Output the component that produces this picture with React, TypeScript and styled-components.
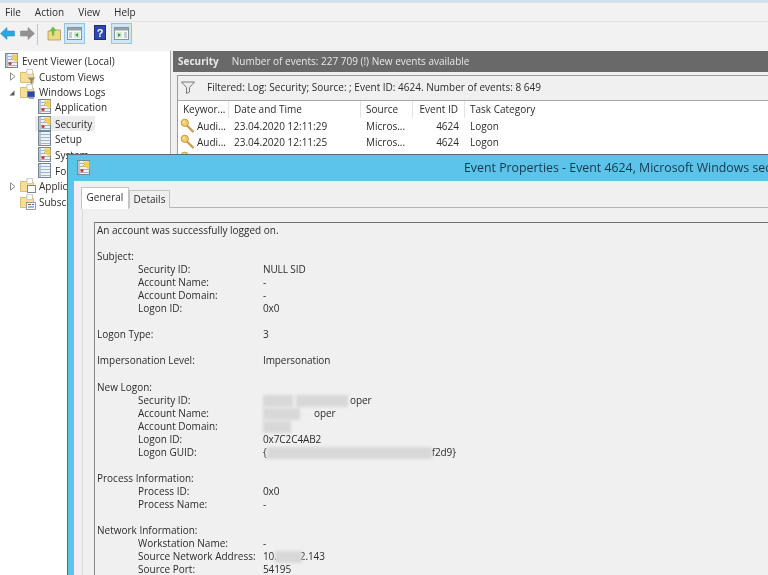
import React from 'react';
import styled, { createGlobalStyle } from 'styled-components';

const GlobalStyle = createGlobalStyle`
  html, body {
    margin: 0;
    padding: 0;
    width: 768px;
    height: 575px;
    overflow: hidden;
    background: #f0f0f0;
  }
  * { box-sizing: border-box; }
`;

const Page = styled.div`
  position: relative;
  width: 768px;
  height: 575px;
  overflow: hidden;
  background: #f0f0f0;
  color: #2b2b2b;
  font-family: 'Open Sans', 'Noto Sans', sans-serif;
  font-size: 10px;
  filter: blur(0.35px);
`;

const TopStrip = styled.div`
  height: 3px;
  background: #d5e0e8;
`;

const MenuBar = styled.div`
  display: flex;
  height: 19px;
  padding-left: 5px;
  gap: 14px;
  align-items: center;
  background: #f2f2f2;
  border-bottom: 1px solid #e4e4e4;
`;

const MenuItem = styled.span`
  font-size: 10px;
`;

const ToolBar = styled.div`
  position: relative;
  height: 29px;
  background: #f2f2f2;
`;

const ToolIcon = styled.svg<{ $x: number; $y?: number }>`
  position: absolute;
  left: ${p => p.$x}px;
  top: ${p => p.$y ?? 3}px;
`;

const ToolSep = styled.div`
  position: absolute;
  left: 37px;
  top: 2px;
  width: 1px;
  height: 21px;
  background: #c4c4c4;
`;

const ToolToggle = styled.div<{ $x: number }>`
  position: absolute;
  left: ${p => p.$x}px;
  top: 1px;
  width: 21px;
  height: 21px;
  background: #cfe6f5;
  border: 1px solid #8fc6e6;
`;

const TreePanel = styled.div`
  position: absolute;
  left: 0;
  top: 51px;
  width: 171px;
  height: 524px;
  background: #fff;
  border-right: 1px solid #b0b0b0;
`;

const TreeRow = styled.div<{ $y: number; $depth: number; $selected?: boolean; $folder?: boolean }>`
  position: absolute;
  top: ${p => p.$y}px;
  left: ${p => p.$depth}px;
  height: 15px;
  display: flex;
  align-items: center;
  gap: ${p => (p.$folder ? 3 : 4)}px;
  padding-right: 3px;
  padding-left: ${p => (p.$selected ? 3 : 0)}px;
  white-space: nowrap;
  background: ${p => (p.$selected ? '#ececec' : 'transparent')};
`;

const CaretIcon = styled.svg<{ $y: number }>`
  position: absolute;
  left: 9px;
  top: ${p => p.$y}px;
`;

const RightPanel = styled.div`
  position: absolute;
  left: 173px;
  top: 51px;
  width: 595px;
  height: 110px;
  background: #f0f0f0;
`;

const Heading = styled.div`
  display: flex;
  align-items: center;
  height: 21px;
  padding: 0 0 2px 5px;
  background: #696969;
  color: #e8e8e8;
`;

const HeadingTitle = styled.span`
  font-weight: 700;
  margin-right: 13px;
`;

const FilterBox = styled.div`
  position: absolute;
  left: 4px;
  top: 24px;
  width: 591px;
  height: 85px;
  background: #fff;
  border: 1px solid #9a9a9a;
  border-right: 0;
  overflow: hidden;
`;

const FilterRow = styled.div`
  position: relative;
  display: flex;
  align-items: center;
  height: 25px;
  padding: 0 0 2px 29px;
  background: #f0f0f0;
  border-bottom: 1px solid #a8a8a8;
`;

const FilterIcon = styled.svg`
  position: absolute;
  left: 3px;
  top: 5px;
`;

const TableRow = styled.div`
  display: flex;
  align-items: center;
  height: 16.5px;
  background: #fff;
`;

const Cell = styled.div<{ $w: number; $right?: boolean; $head?: boolean }>`
  position: relative;
  width: ${p => p.$w}px;
  height: 100%;
  line-height: 16px;
  flex: none;
  padding: ${p => (p.$right ? '0 6px 0 0' : '0 0 0 5px')};
  text-align: ${p => (p.$right ? 'right' : 'left')};
  white-space: nowrap;
  overflow: hidden;
  ${p => p.$head && 'border-right: 1px solid #e3e3e3;'}
`;

const KeyIcon = styled.svg`
  position: absolute;
  left: 2px;
  top: 0;
`;

const KeyCellText = styled.span`
  padding-left: 14px;
`;

const Dialog = styled.div`
  position: absolute;
  left: 67px;
  top: 154px;
  width: 701px;
  height: 421px;
  background: #f0f0f0;
  border-top: 1px solid #5a6b75;
  border-left: 1px solid #5a6b75;
`;

const TitleBar = styled.div`
  position: relative;
  height: 26px;
  background: #5cc4ea;
  color: #16384a;
  font-size: 12.35px;
  line-height: 25px;
  padding-left: 396px;
  white-space: nowrap;
`;

const TitleIcon = styled.svg`
  position: absolute;
  left: 9px;
  top: 5px;
`;

const BlueEdge = styled.div`
  position: absolute;
  left: 0;
  top: 26px;
  bottom: 0;
  width: 6px;
  background: #5cc4ea;
`;

const Tab = styled.div<{ $x: number; $w: number; $active?: boolean }>`
  position: absolute;
  left: ${p => p.$x}px;
  top: ${p => (p.$active ? 32 : 35)}px;
  width: ${p => p.$w}px;
  height: ${p => (p.$active ? 22 : 18)}px;
  text-align: center;
  line-height: ${p => (p.$active ? 19 : 17)}px;
  background: ${p => (p.$active ? '#fff' : '#f0f0f0')};
  border: 1px solid #c4c4c4;
  border-bottom: 0;
  z-index: 2;
`;

const TabFrame = styled.div`
  position: absolute;
  left: 14px;
  top: 52px;
  width: 692px;
  height: 369px;
  background: #f0f0f0;
  border-top: 1px solid #b4b4b4;
  border-left: 1px solid #dadada;
`;

const MessageBox = styled.div`
  position: absolute;
  left: 11px;
  top: 14px;
  width: 680px;
  height: 360px;
  padding: 1px 0 0 2px;
  border-top: 1px solid #6e6e6e;
  border-left: 1px solid #8a8a8a;
`;

const Line = styled.div<{ $indent?: boolean }>`
  position: relative;
  height: 13.05px;
  line-height: 13.05px;
  white-space: nowrap;
  padding-left: ${p => (p.$indent ? 41 : 0)}px;
`;

const LineLabel = styled.span<{ $wide?: boolean }>`
  display: inline-block;
  width: ${p => (p.$wide ? 166 : 125)}px;
`;

const Smudge = styled.span<{ $x: number; $w: number }>`
  position: absolute;
  left: ${p => p.$x}px;
  top: 1px;
  width: ${p => p.$w}px;
  height: 12px;
  background: #d8d8d8;
  filter: blur(1.5px);
`;

const Tail = styled.span<{ $gap: number }>`
  margin-left: ${p => p.$gap}px;
`;

const Mono = styled.span`
  letter-spacing: -0.1px;
`;

const LogGlyph = ({ plain }: { plain?: boolean }) => (
  <>
    <rect x="0.5" y="0.5" width="12" height="14" fill="#eef2f7" stroke="#75879a" />
    <rect x="1" y="1" width="2" height="13" fill="#b4c2d2" />
    <path d="M3 3.5h9M3 6.5h9M3 9.5h9M3 12.5h9" stroke="#a3b4c6" strokeWidth="1" />
    {!plain && <path d="M6 1.5h6.5V9L9 8z" fill="#f4cf56" />}
    {!plain && <path d="M5 7l3-3" stroke="#e0a93a" strokeWidth="1" />}
    {!plain && <circle cx="5" cy="10.5" r="1.6" fill="#c8392f" />}
  </>
);

const LogIcon = ({ plain }: { plain?: boolean }) => (
  <svg width="13" height="15" viewBox="0 0 13 15">
    <LogGlyph plain={plain} />
  </svg>
);

type Badge = 'filter' | 'monitor' | 'window' | 'sub';

const FolderIcon = ({ badge }: { badge: Badge }) => (
  <svg width="16" height="16" viewBox="0 0 16 16">
    <path d="M0.5 3.5h5l1-1h6v2h1v9H0.5z" fill="#f4df95" stroke="#cfb163" strokeWidth="0.8" />
    <rect x="7" y="0.5" width="5.5" height="5" fill="#fdfdfd" stroke="#bcbcbc" strokeWidth="0.7" />
    {badge === 'filter' && <path d="M7.5 8.5h8l-3 3v4l-2-1v-3z" fill="#8c8c8c" />}
    {badge === 'monitor' && (
      <>
        <rect x="7.5" y="7.5" width="7" height="5.5" fill="#2748a6" stroke="#6d7a96" strokeWidth="0.6" />
        <rect x="9" y="13" width="5" height="2" fill="#9aa4b5" />
      </>
    )}
    {badge === 'window' && <rect x="7.5" y="7.5" width="8" height="7" fill="#fff" stroke="#858585" />}
    {badge === 'sub' && (
      <>
        <rect x="6.5" y="8.5" width="9" height="7" fill="#fff" stroke="#7d8796" strokeWidth="0.8" />
        <path d="M8 10.5h3" stroke="#c8392f" />
        <path d="M12 10.5h2M8 13h6" stroke="#3f6fc0" />
      </>
    )}
  </svg>
);

const Caret = ({ y, open }: { y: number; open?: boolean }) => (
  <CaretIcon $y={y} width="7" height="9" viewBox="0 0 7 9">
    {open ? (
      <path d="M5.5 2.5v5h-5z" fill="#5a5a5a" />
    ) : (
      <path d="M1.5 0.8L6 4.5L1.5 8.2z" fill="#fff" stroke="#8d8d8d" />
    )}
  </CaretIcon>
);

const KeySvg = () => (
  <KeyIcon width="15" height="16" viewBox="0 0 15 16">
    <circle cx="4.8" cy="4.8" r="3.6" fill="#f2cd6d" stroke="#c09a3e" />
    <circle cx="3.8" cy="3.8" r="1" fill="#fff3c9" />
    <path d="M7 7.5l6.5 6.5" stroke="#c99a45" strokeWidth="2.2" />
  </KeyIcon>
);

const PaneIcon = ({ flip }: { flip?: boolean }) => (
  <svg width="19" height="19" viewBox="0 0 19 19">
    <rect x="2.5" y="3.5" width="14" height="12" fill="#f5f7f8" stroke="#88949d" />
    <rect x="3" y="4" width="13" height="2.5" fill="#96a2ab" />
    {flip ? (
      <>
        <rect x="4" y="8" width="6" height="6" fill="#d6ecd2" />
        <path d="M6 9v4l3-2z" fill="#35a04a" />
        <path d="M12 9h3M12 11h3M12 13h3" stroke="#93a0aa" />
      </>
    ) : (
      <>
        <path d="M4 9h3M4 11h3M4 13h3" stroke="#93a0aa" />
        <rect x="9" y="8" width="6" height="6" fill="#d6ecd2" />
        <path d="M13 9v4l-3-2z" fill="#35a04a" />
      </>
    )}
  </svg>
);

const treeRows = [
  { y: 48, d: 38, label: 'Application', plain: false },
  { y: 65, d: 35, label: 'Security', plain: false, selected: true },
  { y: 80, d: 38, label: 'Setup', plain: true },
  { y: 96, d: 38, label: 'System', plain: false },
  { y: 112, d: 38, label: 'Forwarded Events', plain: true },
];

const events = ['12:11:29', '12:11:25'];

type Row = { label?: string; value?: React.ReactNode; indent?: boolean };

const lines: Row[] = [
  { label: 'An account was successfully logged on.' },
  {},
  { label: 'Subject:' },
  { indent: true, label: 'Security ID:', value: 'NULL SID' },
  { indent: true, label: 'Account Name:', value: '-' },
  { indent: true, label: 'Account Domain:', value: '-' },
  { indent: true, label: 'Logon ID:', value: '0x0' },
  {},
  { label: 'Logon Type:', value: '3' },
  {},
  { label: 'Impersonation Level:', value: 'Impersonation' },
  {},
  { label: 'New Logon:' },
  {
    indent: true,
    label: 'Security ID:',
    value: (
      <>
        <Smudge $x={166} $w={30} />
        <Smudge $x={199} $w={52} />
        <Tail $gap={87}>oper</Tail>
      </>
    ),
  },
  {
    indent: true,
    label: 'Account Name:',
    value: (
      <>
        <Smudge $x={166} $w={37} />
        <Tail $gap={51}>oper</Tail>
      </>
    ),
  },
  { indent: true, label: 'Account Domain:', value: <Smudge $x={166} $w={28} /> },
  { indent: true, label: 'Logon ID:', value: '0x7C2C4AB2' },
  {
    indent: true,
    label: 'Logon GUID:',
    value: (
      <>
        <Smudge $x={170} $w={165} />
        {'{'}
        <Tail $gap={165}>f2d9{'}'}</Tail>
      </>
    ),
  },
  {},
  { label: 'Process Information:' },
  { indent: true, label: 'Process ID:', value: '0x0' },
  { indent: true, label: 'Process Name:', value: '-' },
  {},
  { label: 'Network Information:' },
  { indent: true, label: 'Workstation Name:', value: '-' },
  {
    indent: true,
    label: 'Source Network Address:',
    value: (
      <>
        <Smudge $x={178} $w={27} />
        10.
        <Tail $gap={23}>2.143</Tail>
      </>
    ),
  },
  { indent: true, label: 'Source Port:', value: '54195' },
];

const App = () => (
  <Page>
    <GlobalStyle />
    <TopStrip />
    <MenuBar>
      <MenuItem>File</MenuItem>
      <MenuItem>Action</MenuItem>
      <MenuItem>View</MenuItem>
      <MenuItem>Help</MenuItem>
    </MenuBar>
    <ToolBar>
      <ToolIcon $x={0} $y={5} width="15" height="13" viewBox="0 0 15 13">
        <path d="M0.5 6.5L7 0.5v3.5h7.5v5H7v3.5z" fill="#2ba6e0" stroke="#1b8ac2" strokeWidth="0.5" />
      </ToolIcon>
      <ToolIcon $x={20} $y={5} width="15" height="13" viewBox="0 0 15 13">
        <path d="M14.5 6.5L8 0.5v3.5H0.5v5H8v3.5z" fill="#929292" stroke="#808080" strokeWidth="0.5" />
      </ToolIcon>
      <ToolSep />
      <ToolIcon $x={47} $y={4} width="14" height="15" viewBox="0 0 14 15">
        <path d="M1 5h4l1-1h7.5v10H1z" fill="#eed989" stroke="#a88f3c" strokeWidth="0.7" />
        <path d="M6 0.5L2.5 5H5v4.5h2.2V5h2.3z" fill="#6cb94c" />
      </ToolIcon>
      <ToolToggle $x={64}>
        <PaneIcon />
      </ToolToggle>
      <ToolIcon $x={94} $y={3} width="13" height="15" viewBox="0 0 13 15">
        <rect x="0.5" y="0.5" width="11" height="14" fill="#2f48b0" stroke="#1d2f7c" />
        <text x="6" y="11.5" fontSize="11" fontWeight="700" fontFamily="Liberation Sans" fill="#fff" textAnchor="middle">?</text>
      </ToolIcon>
      <ToolToggle $x={111}>
        <PaneIcon flip />
      </ToolToggle>
    </ToolBar>
    <TreePanel>
      <TreeRow $y={2} $depth={5}>
        <LogIcon />
        <span>Event Viewer (Local)</span>
      </TreeRow>
      <Caret y={21} />
      <TreeRow $y={18} $depth={20} $folder>
        <FolderIcon badge="filter" />
        <span>Custom Views</span>
      </TreeRow>
      <Caret y={37} open />
      <TreeRow $y={33} $depth={20} $folder>
        <FolderIcon badge="monitor" />
        <span>Windows Logs</span>
      </TreeRow>
      {treeRows.map(r => (
        <TreeRow key={r.label} $y={r.y} $depth={r.d} $selected={r.selected}>
          <LogIcon plain={r.plain} />
          <span>{r.label}</span>
        </TreeRow>
      ))}
      <Caret y={131} />
      <TreeRow $y={127} $depth={20} $folder>
        <FolderIcon badge="window" />
        <span>Applications and Services Logs</span>
      </TreeRow>
      <TreeRow $y={143} $depth={20} $folder>
        <FolderIcon badge="sub" />
        <span>Subscriptions</span>
      </TreeRow>
    </TreePanel>
    <RightPanel>
      <Heading>
        <HeadingTitle>Security</HeadingTitle>
        <span>Number of events: 227 709 (!) New events available</span>
      </Heading>
      <FilterBox>
        <FilterRow>
          <FilterIcon width="14" height="13" viewBox="0 0 14 13">
            <path d="M0.5 1h13L8.5 6.5V11l-3 1.5v-6z" fill="#ececec" stroke="#7a7a7a" />
          </FilterIcon>
          <span>Filtered: Log: Security; Source: ; Event ID: 4624. Number of events: 8 649</span>
        </FilterRow>
        <TableRow>
          <Cell $w={51} $head>Keywor...</Cell>
          <Cell $w={132} $head>Date and Time</Cell>
          <Cell $w={52} $head>Source</Cell>
          <Cell $w={52} $head $right>Event ID</Cell>
          <Cell $w={110}>Task Category</Cell>
        </TableRow>
        {events.map(t => (
          <TableRow key={t}>
            <Cell $w={51}>
              <KeySvg />
              <KeyCellText>Audi...</KeyCellText>
            </Cell>
            <Cell $w={132}>23.04.2020 {t}</Cell>
            <Cell $w={52}>Micros...</Cell>
            <Cell $w={52} $right>4624</Cell>
            <Cell $w={110}>Logon</Cell>
          </TableRow>
        ))}
        <TableRow>
          <Cell $w={51}>
            <KeySvg />
          </Cell>
        </TableRow>
      </FilterBox>
    </RightPanel>
    <Dialog>
      <TitleBar>
        <TitleIcon width="13" height="15" viewBox="0 0 13 15">
          <LogGlyph />
        </TitleIcon>
        Event Properties - Event 4624, Microsoft Windows security auditing.
      </TitleBar>
      <BlueEdge />
      <Tab $x={13} $w={48} $active>General</Tab>
      <Tab $x={61} $w={41}>Details</Tab>
      <TabFrame>
        <MessageBox>
          {lines.map((l, i) => (
            <Line key={i} $indent={l.indent}>
              {l.value !== undefined ? (
                <>
                  <LineLabel $wide={!l.indent}>{l.label}</LineLabel>
                  <Mono>{l.value}</Mono>
                </>
              ) : (
                l.label
              )}
            </Line>
          ))}
        </MessageBox>
      </TabFrame>
    </Dialog>
  </Page>
);

export default App;
